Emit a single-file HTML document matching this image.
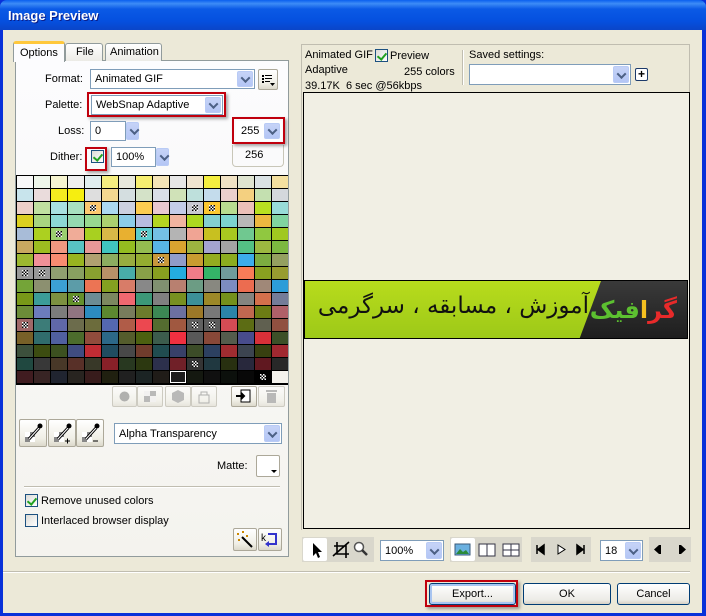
<!DOCTYPE html>
<html><head><meta charset="utf-8"><style>
*{box-sizing:border-box;margin:0;padding:0}
body{width:706px;height:616px;overflow:hidden;background:#0831d9;font-family:"Liberation Sans",sans-serif;font-size:11px;color:#000;position:relative}
.a{position:absolute}
#title{left:0;top:0;width:706px;height:30px;background:linear-gradient(#0a5fef 0%,#3d8cf6 12%,#0b5ae6 30%,#0550df 70%,#0a45c8 100%);border-radius:7px 7px 0 0}
#title span{position:absolute;left:8px;top:8px;color:#fff;font-weight:bold;font-size:13px;text-shadow:1px 1px 0 #0a1e8a}
#body{left:3px;top:30px;width:699px;height:583px;background:#ece9d8}
.sel{position:absolute;background:#fff;border:1px solid #7f9db9}
.arr{position:absolute;top:1px;right:1px;bottom:1px;width:16px;background:linear-gradient(#c6d3f7,#b4c6f5);border:1px solid #b9cbf5;border-radius:2px}
.arr:after{content:"";position:absolute;left:4px;top:50%;margin-top:-3px;width:5px;height:5px;border-right:2px solid #4d6185;border-bottom:2px solid #4d6185;transform:rotate(45deg) translate(-1px,-1px)}
.sel .t{position:absolute;left:4px;top:50%;transform:translateY(-50%);white-space:nowrap}
.red{position:absolute;border:2px solid #c0000d;box-shadow:2px 2px 3px rgba(0,0,0,.35)}
.btn{position:absolute;border:1px solid #003c74;border-radius:3px;background:linear-gradient(#fff,#ecebe6 80%,#d6d0c5);text-align:center}
.tb{position:absolute;border:1px solid #aca899;background:linear-gradient(#fff,#f0efe6 70%,#dcd9cc);border-radius:2px}
.dis{opacity:.55}
.cb{position:absolute;width:13px;height:13px;border:1px solid #1c5180;background:linear-gradient(135deg,#dcdcd7,#fff)}
.ck:after{content:"";position:absolute;left:3px;top:1px;width:4px;height:7px;border-right:2px solid #21a121;border-bottom:2px solid #21a121;transform:rotate(40deg)}
#grid{left:16px;top:175px;width:272px;height:210px;background:#000;display:grid;grid-template-columns:repeat(16,17px);grid-template-rows:repeat(16,13px);padding:1px 0 0 1px}
#grid i{display:block;width:16px;height:12px;position:relative}
#grid i.c:after{content:"";position:absolute;left:5px;top:3px;width:6px;height:6px;background:repeating-conic-gradient(#000 0 25%,#fff 0 50%) 0 0/3px 3px}
.grp{position:absolute;background:#d9d7cc;height:25px;top:537px}
#ban{left:304px;top:280px;width:384px;height:59px;overflow:hidden;background:linear-gradient(#3a3a3a,#1e1e1e);border:1px solid #000}
</style></head><body>
<div id="title" class="a"><span>Image Preview</span></div>
<div id="body" class="a"></div>

<div class="a" style="left:15px;top:60px;width:274px;height:497px;border:1px solid #919b9c;background:linear-gradient(#fcfcfe,#f4f3ee)"></div>
<div class="a" style="left:13px;top:41px;width:52px;height:21px;border:1px solid #919b9c;border-bottom:none;border-top:3px solid #ffc83c;background:#fcfcfe;border-radius:3px 3px 0 0;padding:3px 0 0 6px;font-size:11px">Options</div>
<div class="a" style="left:65px;top:43px;width:38px;height:18px;border:1px solid #919b9c;border-bottom:none;background:linear-gradient(#fff,#ecebe6);border-radius:3px 3px 0 0;padding:2px 0 0 10px">File</div>
<div class="a" style="left:105px;top:43px;width:57px;height:18px;border:1px solid #919b9c;border-bottom:none;background:linear-gradient(#fff,#ecebe6);border-radius:3px 3px 0 0;padding:2px 0 0 4px">Animation</div>

<div class="a" style="left:45px;top:73px">Format:</div>
<div class="sel" style="left:90px;top:69px;width:165px;height:20px"><span class="t">Animated GIF</span><div class="arr"></div></div>
<div class="tb" style="left:258px;top:69px;width:20px;height:21px"><svg width="18" height="19"><g fill="#000"><rect x="3" y="5" width="2" height="2"/><rect x="6" y="5" width="7" height="1"/><rect x="3" y="8" width="2" height="2"/><rect x="6" y="8" width="7" height="1"/><rect x="3" y="11" width="2" height="2"/><rect x="6" y="11" width="5" height="1"/><path d="M11 13h5l-2.5 3z"/></g></svg></div>

<div class="a" style="left:45px;top:99px">Palette:</div>
<div class="red" style="left:87px;top:92px;width:139px;height:25px"></div>
<div class="sel" style="left:91px;top:95px;width:132px;height:20px"><span class="t">WebSnap Adaptive</span><div class="arr"></div></div>

<div class="a" style="left:58px;top:125px">Loss:</div>
<div class="sel" style="left:90px;top:121px;width:36px;height:20px"><span class="t">0</span></div>
<div class="sel" style="left:126px;top:121px;width:14px;height:20px;border:none;background:none"><div class="arr" style="width:13px"></div></div>
<div class="a" style="left:232px;top:145px;width:52px;height:22px;border:1px solid #c8c6b8;border-top:none;border-radius:0 0 4px 4px"></div>
<div class="a" style="left:245px;top:149px">256</div>
<div class="red" style="left:232px;top:117px;width:53px;height:27px"></div>
<div class="sel" style="left:236px;top:121px;width:46px;height:20px;border-color:#fff"><span class="t">255</span><div class="arr"></div></div>

<div class="a" style="left:50px;top:151px">Dither:</div>
<div class="red" style="left:85px;top:147px;width:22px;height:24px"></div>
<div class="cb ck" style="left:91px;top:150px"></div>
<div class="sel" style="left:111px;top:147px;width:45px;height:20px"><span class="t">100%</span></div>
<div class="sel" style="left:156px;top:147px;width:14px;height:20px;border:none;background:none"><div class="arr" style="width:13px"></div></div>

<div id="grid" class="a"></div>

<div class="tb dis" style="left:112px;top:386px;width:25px;height:21px"><svg width="23" height="19"><circle cx="11.5" cy="9.5" r="5" fill="#777"/></svg></div>
<div class="tb dis" style="left:137px;top:386px;width:26px;height:21px"><svg width="24" height="19"><rect x="6" y="4" width="12" height="11" fill="#888"/><rect x="6" y="4" width="6" height="5" fill="#eee"/><rect x="12" y="9" width="6" height="6" fill="#eee"/></svg></div>
<div class="tb dis" style="left:165px;top:386px;width:26px;height:21px"><svg width="24" height="19"><path d="M12 3l6 3v7l-6 3-6-3V6z" fill="#888"/></svg></div>
<div class="tb dis" style="left:191px;top:386px;width:26px;height:21px"><svg width="24" height="19"><rect x="7" y="8" width="10" height="8" fill="none" stroke="#777"/><path d="M9 8V5h6v3" fill="none" stroke="#777"/></svg></div>
<div class="tb" style="left:231px;top:386px;width:26px;height:21px"><svg width="24" height="19"><rect x="9" y="3" width="9" height="12" fill="#fff" stroke="#000"/><path d="M4 9h8M9 6l3 3-3 3" stroke="#000" stroke-width="2" fill="none"/></svg></div>
<div class="tb dis" style="left:258px;top:386px;width:27px;height:21px"><svg width="25" height="19"><rect x="8" y="6" width="9" height="10" fill="#888"/><rect x="7" y="3" width="11" height="2" fill="#888"/></svg></div>

<div class="tb" style="left:19px;top:419px;width:28px;height:28px"><svg width="26" height="26"><rect x="5" y="12" width="10" height="10" fill="#888"/><rect x="5" y="12" width="5" height="5" fill="#fff"/><rect x="10" y="17" width="5" height="5" fill="#fff"/><path d="M9 19L19 8" stroke="#000" stroke-width="3"/><path d="M9 19L19 8" stroke="#fff" stroke-width="1"/><circle cx="20" cy="6" r="2.5" fill="#000"/></svg></div>
<div class="tb" style="left:48px;top:419px;width:28px;height:28px"><svg width="26" height="26"><rect x="5" y="12" width="10" height="10" fill="#888"/><rect x="5" y="12" width="5" height="5" fill="#fff"/><rect x="10" y="17" width="5" height="5" fill="#fff"/><path d="M9 19L19 8" stroke="#000" stroke-width="3"/><path d="M9 19L19 8" stroke="#fff" stroke-width="1"/><circle cx="20" cy="6" r="2.5" fill="#000"/><path d="M16 21h5M18.5 18.5v5" stroke="#000"/></svg></div>
<div class="tb" style="left:76px;top:419px;width:28px;height:28px"><svg width="26" height="26"><rect x="5" y="12" width="10" height="10" fill="#888"/><rect x="5" y="12" width="5" height="5" fill="#fff"/><rect x="10" y="17" width="5" height="5" fill="#fff"/><path d="M9 19L19 8" stroke="#000" stroke-width="3"/><path d="M9 19L19 8" stroke="#fff" stroke-width="1"/><circle cx="20" cy="6" r="2.5" fill="#000"/><path d="M16 21h5" stroke="#000"/></svg></div>
<div class="sel" style="left:114px;top:423px;width:168px;height:21px"><span class="t">Alpha Transparency</span><div class="arr"></div></div>

<div class="a" style="left:217px;top:460px">Matte:</div>
<div class="a" style="left:256px;top:455px;width:24px;height:22px;border:1px solid #aca899;background:#fff;border-radius:2px"><div class="a" style="right:2px;bottom:3px;border:3px solid transparent;border-top-color:#000;border-bottom:none"></div></div>
<div class="a" style="left:24px;top:486px;width:256px;height:2px;border-top:1px solid #c0bdb0;border-bottom:1px solid #fff"></div>
<div class="cb ck" style="left:25px;top:494px"></div><div class="a" style="left:41px;top:495px">Remove unused colors</div>
<div class="cb" style="left:25px;top:514px"></div><div class="a" style="left:41px;top:515px">Interlaced browser display</div>
<div class="tb" style="left:233px;top:528px;width:24px;height:23px"><svg width="22" height="21"><path d="M8 8l10 10" stroke="#000" stroke-width="2"/><g fill="#c80"><rect x="3" y="4" width="2" height="2"/><rect x="8" y="2" width="2" height="2"/><rect x="4" y="10" width="2" height="2"/><rect x="12" y="6" width="2" height="2"/></g></svg></div>
<div class="tb" style="left:258px;top:528px;width:24px;height:23px"><svg width="22" height="21"><text x="2" y="12" font-size="10" font-family="Liberation Sans">k</text><path d="M9 5h8v10h-8" fill="none" stroke="#33c" stroke-width="2"/><path d="M6 15l4-3v6z" fill="#33c"/></svg></div>

<div class="a" style="left:301px;top:44px;width:389px;height:486px;border:1px solid #c0bdb0;border-bottom:none"></div>
<div class="a" style="left:305px;top:49px">Animated GIF</div>
<div class="cb ck" style="left:375px;top:49px"></div>
<div class="a" style="left:390px;top:50px">Preview</div>
<div class="a" style="left:305px;top:64px">Adaptive</div>
<div class="a" style="left:404px;top:66px">255 colors</div>
<div class="a" style="left:305px;top:80px">39.17K&nbsp; 6 sec @56kbps</div>
<div class="a" style="left:462px;top:50px;width:2px;height:35px;border-left:1px solid #c0bdb0;border-right:1px solid #fff"></div>
<div class="a" style="left:469px;top:49px">Saved settings:</div>
<div class="sel" style="left:469px;top:64px;width:162px;height:21px"><div class="arr"></div></div>
<div class="a" style="left:635px;top:68px;width:13px;height:13px;border:1px solid #1c3a6a;background:#fff;border-radius:2px;font-size:12px;line-height:10px;text-align:center;font-weight:bold">+</div>

<div class="a" style="left:303px;top:92px;width:387px;height:437px;border:1px solid #000;background:#f1efe4"></div>
<div id="ban" class="a">
<svg class="a" style="left:0;top:0" width="384" height="59"><defs><linearGradient id="g" x1="0" y1="0" x2="0" y2="1"><stop offset="0" stop-color="#b8dc1c"/><stop offset="1" stop-color="#9cc818"/></linearGradient></defs><path d="M0 0H296L274 59H0z" fill="url(#g)"/></svg>
<div class="a" dir="rtl" style="right:98px;top:12px;font-family:'DejaVu Sans',sans-serif;font-size:23px;white-space:nowrap;color:#111">آموزش ، مسابقه ، سرگرمی</div>
<div class="a" dir="rtl" style="right:10px;top:15px;font-family:'DejaVu Sans',sans-serif;font-size:24px;font-weight:bold;white-space:nowrap;color:#e82a2a">گر<span style="color:#f4c020">ا</span><span style="color:#5cc030">فیک</span></div>
</div>

<div class="grp" style="left:302px;width:72px"></div>
<div class="a" style="left:303px;top:538px;width:24px;height:23px;background:#fff;border-radius:2px"></div>
<svg class="a" style="left:303px;top:538px" width="72" height="23"><path d="M10 5v13l3-3 2 5 2-1-2-5h4z" fill="#000"/><path d="M34 4v12h12M31 8h12v12M30 18l16-14" stroke="#000" stroke-width="1.6" fill="none"/><circle cx="56" cy="9" r="4.5" fill="#fff" stroke="#555" stroke-width="1.5"/><path d="M59 12l5 5" stroke="#333" stroke-width="2.5"/></svg>
<div class="sel" style="left:380px;top:540px;width:64px;height:21px"><span class="t">100%</span><div class="arr"></div></div>
<div class="grp" style="left:450px;width:72px"></div>
<div class="a" style="left:451px;top:538px;width:24px;height:23px;background:#fff;border-radius:2px"></div>
<svg class="a" style="left:451px;top:538px" width="72" height="23"><rect x="4" y="6" width="15" height="11" fill="#6ab0e0" stroke="#3a5a7a"/><path d="M5 16l4-5 3 3 3-2 3 4z" fill="#2a8a3a"/><rect x="28" y="6" width="16" height="12" fill="#fff" stroke="#334"/><path d="M36 6v12" stroke="#334"/><rect x="52" y="6" width="16" height="12" fill="#fff" stroke="#334"/><path d="M60 6v12M52 12h16" stroke="#334"/></svg>
<div class="grp" style="left:531px;width:60px"></div>
<svg class="a" style="left:531px;top:538px" width="60" height="23"><path d="M6 7v9M13 7l-6 4.5 6 4.5z" stroke="#000" fill="#000" stroke-width="1.5"/><path d="M27 7v9l7-4.5z" fill="#fff" stroke="#000"/><path d="M46 7l6 4.5-6 4.5zM53 7v9" stroke="#000" fill="#000" stroke-width="1.5"/></svg>
<div class="sel" style="left:600px;top:540px;width:43px;height:21px"><span class="t">18</span><div class="arr"></div></div>
<div class="grp" style="left:649px;width:42px"></div>
<svg class="a" style="left:649px;top:538px" width="42" height="23"><path d="M5 11.5l5-4.5v9zM10 7h2v9h-2z" fill="#000"/><path d="M30 7h2v9h-2zM32 7l5 4.5-5 4.5z" fill="#000"/></svg>

<div class="a" style="left:3px;top:571px;width:687px;height:2px;border-top:1px solid #c0bdb0;border-bottom:1px solid #fff"></div>
<div class="red" style="left:425px;top:580px;width:93px;height:27px"></div>
<div class="btn" style="left:429px;top:583px;width:87px;height:22px;line-height:20px;box-shadow:inset 0 0 0 2px #a8c4f0">Export...</div>
<div class="btn" style="left:523px;top:583px;width:88px;height:22px;line-height:20px">OK</div>
<div class="btn" style="left:617px;top:583px;width:73px;height:22px;line-height:20px">Cancel</div>

<script>
var rows=[
"f8f8f8 eef6ea f6f4d0 efefef e0eef0 f6ee80 e8e8dc f6ee70 f4e4b8 e6e6e6 f0e4d0 f4ee40 f0e2c4 dfe4d0 dae2e4 f4e0a0",
"c8e4ec eadcdc f4ec20 f6ee10 dedede f4d890 d4dee0 d4e2c8 dadee8 d0e2b8 bee0dc c4dcec ead0cc f4d080 c4e0b0 d4d8dc",
"ecd0c8 c0e0a0 a8e0e0 a8e0c0 fcc870 acd8f0 ccd0e0 fccc50 e8c8d0 c4cce8 c8c8d0 fcc830 b8dc90 ecc0b8 b8e020 98dcd8",
"dcd020 a8d480 8cd8d4 94d8b0 98d890 acd070 8ccce8 b8bce0 b4d420 f0b4a0 acd820 84d0d0 7cd4d0 b8b8b8 ecb840 80d4a0",
"a8bcd8 acd020 9cd070 f0ac98 a8d020 d8b848 e8b030 5ccccc 74c0e4 b4b4b4 f0a494 c8c020 a8c820 70c890 90c840 a0c820",
"c8a860 9cbc20 f09880 58c4c4 e89898 40c4c0 94bc20 94bc50 58b4e4 d8a430 9cb440 a4a4d0 a4a4a4 54c084 9cb840 7cb840",
"9cb830 f09098 f88c70 98b420 b0a070 8cac60 98ac40 94ac30 c8983c 909cc8 c89c30 94ac20 8cac20 3cacec 7cac40 94a060",
"989898 989898 90a070 88a060 88a030 b89068 48aca8 88a048 88a020 24ace0 f07c88 34b468 709c9c f87c58 88a020 989c30",
"74a438 8c9070 3ca0d4 5c9ca8 ec7454 84a020 d87c68 888888 809070 b88070 6c9c84 888880 7c8cc0 ec6c50 a08878 2c9cd8",
"789818 3c9c98 7c9040 64902c 6c8c94 7c8860 f06870 3c9878 808080 789020 3c9098 9c8828 74901c 848480 d4704c 747c98",
"6c8c38 6c7cbc 7c7c7c 907480 2c8cc0 5c8830 787c5c 6c7c2c 3c8854 6c70a0 9c7828 787878 2c84a8 c06850 6c7c14 b06068",
"a06868 3c7c78 6068a8 6c6c4c 6c6c3c 5468b0 b05c48 ec4850 546c30 a05840 606060 5c5c5c d44c54 5c6c14 606050 905040",
"786028 306c6c 5060a0 4c6c2c 904c3c 2c6888 545c2c 4c6010 3c5c4c f03040 585858 884838 545c4c 484c8c d83038 3c5028",
"3c503c 3c4c10 3c5020 404c80 c02c34 204c60 484848 703c2c 204c50 384068 3c4c28 2c4060 a02c30 3c4450 384010 a02830",
"204840 383838 483828 583028 383828 882028 283820 2c3810 2c304c 702028 343434 203840 283010 28283c 601820 282828",
"401c20 382424 202430 282420 381c1c 202010 202020 1c2424 201c18 1c1c1c 141810 101010 0c100c 080808 000000 f4f2ec"];
var ck={"2,4":1,"2,10":1,"2,11":1,"4,2":1,"4,7":1,"6,8":1,"7,0":1,"7,1":1,"9,3":1,"11,0":1,"11,10":1,"11,11":1,"14,10":1,"15,14":1};
var h="";rows.forEach(function(r,i){r.split(" ").forEach(function(c,j){var st="background:#"+c;if(i==15&&j==9)st+=";outline:1px solid #fff;outline-offset:-1px";h+='<i class="'+(ck[i+","+j]?"c":"")+'" style="'+st+'"></i>';});});
document.getElementById("grid").innerHTML=h;
</script>
</body></html>
